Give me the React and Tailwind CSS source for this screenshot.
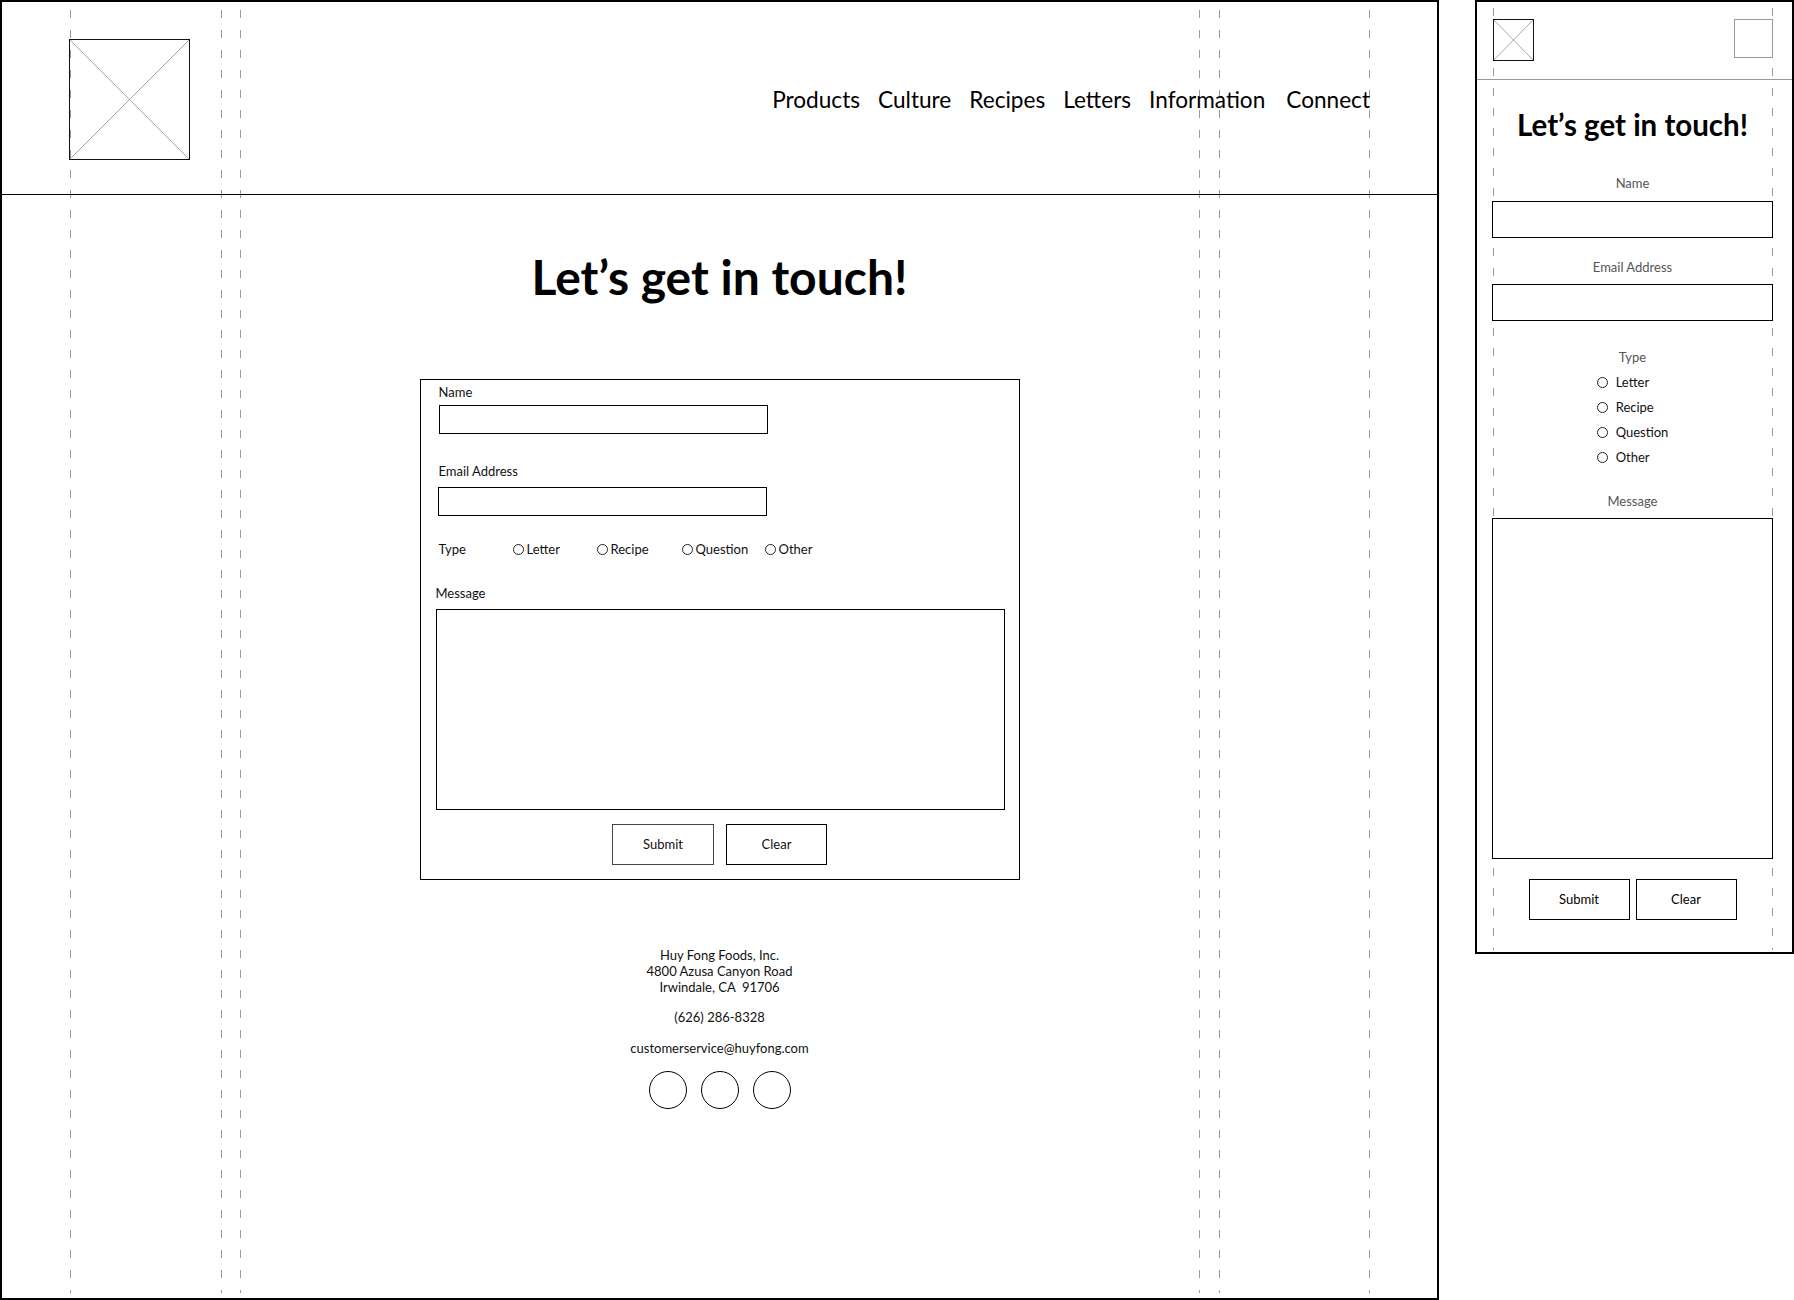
import React from 'react';

const FONT = "font-['Lato','Open_Sans','Liberation_Sans',sans-serif]";
const DASH =
  'bg-[image:repeating-linear-gradient(to_bottom,#9a9a9a_0px,#9a9a9a_8px,transparent_8px,transparent_20px)]';

const Placeholder = ({ className }) => (
  <svg className={className} viewBox="0 0 100 100" preserveAspectRatio="none">
    <line x1="0" y1="0" x2="100" y2="100" stroke="#a8a8a8" strokeWidth="1" vectorEffect="non-scaling-stroke" />
    <line x1="100" y1="0" x2="0" y2="100" stroke="#a8a8a8" strokeWidth="1" vectorEffect="non-scaling-stroke" />
    <rect x="0" y="0" width="100" height="100" fill="none" stroke="#111" strokeWidth="2" vectorEffect="non-scaling-stroke" />
  </svg>
);

const Radio = ({ label, className = '' }) => (
  <span className={`flex items-center gap-[3px] ${className}`}>
    <span className="w-[11px] h-[11px] rounded-full border border-[#222] bg-white shrink-0" />
    <span>{label}</span>
  </span>
);

const navItems = ['Products', 'Culture', 'Recipes', 'Letters', 'Information'];

const Desktop = () => (
  <div className="relative w-[1439px] h-[1300px] shrink-0 border-2 border-black bg-white">
    <div className={`absolute top-[8px] bottom-[5px] left-[68px] w-px ${DASH}`} />
    <div className={`absolute top-[8px] bottom-[5px] left-[219px] w-px ${DASH}`} />
    <div className={`absolute top-[8px] bottom-[5px] left-[238px] w-px ${DASH}`} />
    <div className={`absolute top-[8px] bottom-[5px] left-[1197px] w-px ${DASH}`} />
    <div className={`absolute top-[8px] bottom-[5px] left-[1217px] w-px ${DASH}`} />
    <div className={`absolute top-[8px] bottom-[5px] left-[1367px] w-px ${DASH}`} />

    <div className="relative z-10 flex flex-col text-[#111]">
      <header className="h-[193px] border-b border-black flex items-center justify-between pl-[67px] pr-[67px]">
        <Placeholder className="w-[121px] h-[121px] self-start mt-[37px]" />
        <nav className="mt-[5px] flex items-center gap-[18px] text-[22.6px] text-black">
          {navItems.map((item) => (
            <a key={item} href="#" className="leading-none">
              {item}
            </a>
          ))}
          <a href="#" className="leading-none ml-[3px]">
            Connect
          </a>
        </nav>
      </header>

      <h1 className="mt-[54px] h-[56px] leading-[56px] text-center text-[48px] font-bold text-black">
        Let’s get in touch!
      </h1>

      <form className="mt-[74px] w-[600px] mx-auto border border-black pl-[18px] pr-[14px] pt-[4px] pb-[14px] text-[13px]">
        <label className="block leading-[16px]">Name</label>
        <input type="text" className="block mt-[5px] w-[329px] h-[29px] border border-black bg-white" />

        <label className="block mt-[29px] leading-[16px]">Email Address</label>
        <input type="email" className="block mt-[8px] w-[329px] h-[29px] -ml-px border border-black bg-white" />

        <div className="mt-[25px] h-[16px] flex items-center leading-[16px]">
          <span className="w-[74px]">Type</span>
          <Radio label="Letter" className="w-[84px]" />
          <Radio label="Recipe" className="w-[85px]" />
          <Radio label="Question" className="w-[83px]" />
          <Radio label="Other" />
        </div>

        <label className="block mt-[28px] -ml-[3px] leading-[16px]">Message</label>
        <textarea className="block mt-[8px] -ml-[3px] w-[569px] h-[201px] border border-black bg-white resize-none" />

        <div className="mt-[14px] flex justify-center gap-[12px] -ml-[4px]">
          <button type="button" className="w-[102px] h-[41px] border-[1.5px] border-[#444] bg-white">
            Submit
          </button>
          <button type="button" className="w-[101px] h-[41px] border border-black bg-white">
            Clear
          </button>
        </div>
      </form>

      <footer className="mt-[67px] flex flex-col items-center text-[13px] leading-[16px] text-[#111]">
        <p>Huy Fong Foods, Inc.</p>
        <p>4800 Azusa Canyon Road</p>
        <p className="whitespace-pre">Irwindale, CA  91706</p>
        <p className="mt-[14px]">(626) 286-8328</p>
        <p className="mt-[15px]">customerservice@huyfong.com</p>
        <div className="mt-[15px] flex gap-[14px]">
          <span className="w-[38px] h-[38px] rounded-full border-[1.5px] border-black" />
          <span className="w-[38px] h-[38px] rounded-full border-[1.5px] border-black" />
          <span className="w-[38px] h-[38px] rounded-full border-[1.5px] border-black" />
        </div>
      </footer>
    </div>
  </div>
);

const Mobile = () => (
  <div className="relative w-[319px] h-[954px] shrink-0 border-2 border-black bg-white">
    <div className={`absolute top-[6px] bottom-[2px] left-[16px] w-px ${DASH}`} />
    <div className={`absolute top-[6px] bottom-[2px] left-[295px] w-px ${DASH}`} />

    <div className="relative z-10 flex flex-col text-[13px]">
      <header className="h-[78px] border-b border-[#999] flex items-start justify-between pt-[17px] pl-[16px] pr-[19px]">
        <Placeholder className="w-[41px] h-[42px]" />
        <span className="w-[39px] h-[39px] border border-[#9a9a9a] bg-white" />
      </header>

      <div className="flex flex-col pl-[15px] pr-[19px]">
        <h1 className="mt-[28px] text-center text-[29.5px] leading-[34px] font-bold text-black">
          Let’s get in touch!
        </h1>

        <label className="mt-[33px] text-center leading-[16px] text-[#555]">Name</label>
        <input type="text" className="block mt-[10px] w-full h-[37px] border border-black bg-white" />

        <label className="mt-[21px] text-center leading-[16px] text-[#555]">Email Address</label>
        <input type="email" className="block mt-[9px] w-full h-[37px] border border-black bg-white" />

        <span className="mt-[28px] text-center leading-[16px] text-[#555]">Type</span>
        <div className="mt-[9px] mx-auto flex flex-col gap-[9px] leading-[16px] text-[#111]">
          <Radio label="Letter" className="gap-[8px]" />
          <Radio label="Recipe" className="gap-[8px]" />
          <Radio label="Question" className="gap-[8px]" />
          <Radio label="Other" className="gap-[8px]" />
        </div>

        <label className="mt-[28px] text-center leading-[16px] text-[#555]">Message</label>
        <textarea className="block mt-[9px] w-full h-[341px] border border-black bg-white resize-none" />

        <div className="mt-[20px] flex justify-center gap-[6px]">
          <button type="button" className="w-[101px] h-[41px] border border-black bg-white">
            Submit
          </button>
          <button type="button" className="w-[101px] h-[41px] border border-black bg-white">
            Clear
          </button>
        </div>
      </div>
    </div>
  </div>
);

const App = () => {
  return (
    <div className={`w-[1794px] h-[1300px] bg-white flex items-start gap-[36px] overflow-hidden ${FONT}`}>
      <Desktop />
      <Mobile />
    </div>
  );
};

export default App;
